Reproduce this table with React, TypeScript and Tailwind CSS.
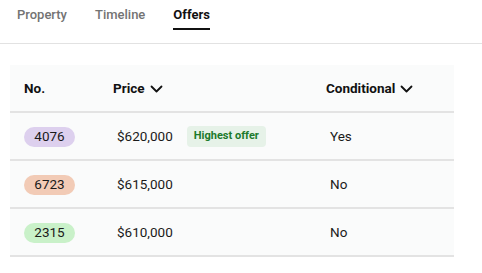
import React from "react";

const tabs = ["Property", "Timeline", "Offers"];

const offers = [
  { no: "4076", price: "$620,000", highest: true, conditional: "Yes", pill: "bg-[#ddd0ee]" },
  { no: "6723", price: "$615,000", highest: false, conditional: "No", pill: "bg-[#f2cbb6]" },
  { no: "2315", price: "$610,000", highest: false, conditional: "No", pill: "bg-[#c9f1c9]" },
];

function Chevron() {
  return (
    <svg width="13" height="8" viewBox="0 0 13 8" fill="none" stroke="currentColor" strokeWidth="1.8" strokeLinecap="round" strokeLinejoin="round">
      <path d="M1.5 1.5l5 5 5-5" />
    </svg>
  );
}

function App() {
  return (
    <div className="w-[482px] h-[273px] bg-white text-[#1a1a1a] overflow-hidden" style={{ fontFamily: "Roboto, 'Liberation Sans', sans-serif" }}>
      <div className="flex gap-[28px] pl-[17px] h-[44px] border-b border-[#e2e2e2]">
        {tabs.map((t) => (
          <div key={t} className={`pt-[5px] text-[13px] ${t === "Offers" ? "font-bold text-[#111]" : "font-medium text-[#737373]"}`}>
            <div className="h-[23px] leading-[20px]">{t}</div>
            {t === "Offers" && <div className="h-[2px] bg-[#111]" />}
          </div>
        ))}
      </div>

      <div className="mt-[21px] ml-[10px] w-[444px] bg-[#fafbfb]">
        <div className="flex items-center h-[48px] pt-[1px] border-b-2 border-[#e3e3e3] text-[13.5px] font-bold text-[#111]">
          <div className="w-[103px] pl-[14px]">No.</div>
          <div className="w-[213px] flex items-center gap-[5px]">
            Price <Chevron />
          </div>
          <div className="flex items-center gap-[5px]">
            Conditional <Chevron />
          </div>
        </div>
        {offers.map((o) => (
          <div key={o.no} className="flex items-center h-[48px] pt-[1px] border-b-2 border-[#e3e3e3] text-[13.5px] text-[#1a1a1a]">
            <div className="w-[103px] pl-[14px]">
              <span className={`inline-flex items-center justify-center w-[51px] h-[20px] rounded-full ${o.pill}`}>{o.no}</span>
            </div>
            <div className="w-[213px] pl-[4px] flex items-center gap-[14px]">
              <span>{o.price}</span>
              {o.highest && (
                <span className="px-[7px] h-[21px] inline-flex items-center rounded-[4px] bg-[#e6f2e8] text-[#1c7a2c] text-[11px] font-bold">
                  Highest offer
                </span>
              )}
            </div>
            <div className="pl-[4px]">{o.conditional}</div>
          </div>
        ))}
      </div>
    </div>
  );
}

export default App;
